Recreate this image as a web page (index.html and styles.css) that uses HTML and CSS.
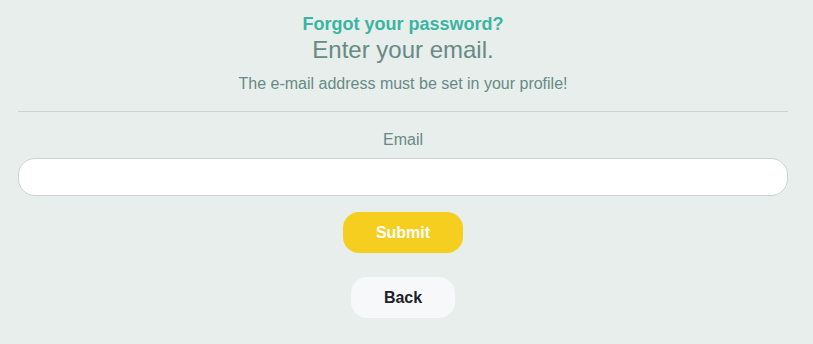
FILE: index.html
```html
<!DOCTYPE html>
<html>
<head>
<meta charset="utf-8">
<link rel="stylesheet" href="styles.css">
</head>
<body>
<div class="page">
  <div class="head">
    <div class="title">Forgot your password?</div>
    <div class="subtitle">Enter your email.</div>
    <div class="note">The e-mail address must be set in your profile!</div>
  </div>
  <hr class="rule">
  <form class="form">
    <label class="label" for="email">Email</label>
    <input class="input" id="email" type="email">
    <button class="btn submit" type="button">Submit</button>
    <button class="btn back" type="button">Back</button>
  </form>
</div>
</body>
</html>
```
FILE: styles.css
```css
html, body {
  margin: 0;
  padding: 0;
  background: #e8eeec;
}
body {
  font-family: "Liberation Sans", Arial, sans-serif;
  color: #678a85;
}
.page {
  padding: 13px 25px 0 18px;
  box-sizing: border-box;
  width: 813px;
}
.head {
  display: flex;
  flex-direction: column;
  align-items: center;
}
.title {
  font-size: 18px;
  font-weight: bold;
  color: #3ab5a1;
  line-height: 22px;
}
.subtitle {
  font-size: 24px;
  line-height: 30px;
}
.note {
  font-size: 16px;
  line-height: 20px;
  margin-top: 9px;
}
.rule {
  border: 0;
  border-top: 1px solid #ccd3d1;
  margin: 17px 0 0;
}
.form {
  display: flex;
  flex-direction: column;
  align-items: center;
}
.label {
  font-size: 16px;
  line-height: 20px;
  margin-top: 18px;
}
.input {
  width: 100%;
  height: 38px;
  box-sizing: border-box;
  border: 1px solid #ccd3d6;
  border-radius: 17px;
  background: #fff;
  margin-top: 8px;
  outline: none;
}
.btn {
  font-family: "Liberation Sans", Arial, sans-serif;
  font-size: 16px;
  font-weight: bold;
  border: 0;
  border-radius: 16px;
  height: 41px;
}
.submit {
  width: 120px;
  background: #f6ce1f;
  color: #fff;
  margin-top: 16px;
}
.back {
  width: 104px;
  background: #f6f8fa;
  color: #1e2228;
  margin-top: 24px;
}
```
